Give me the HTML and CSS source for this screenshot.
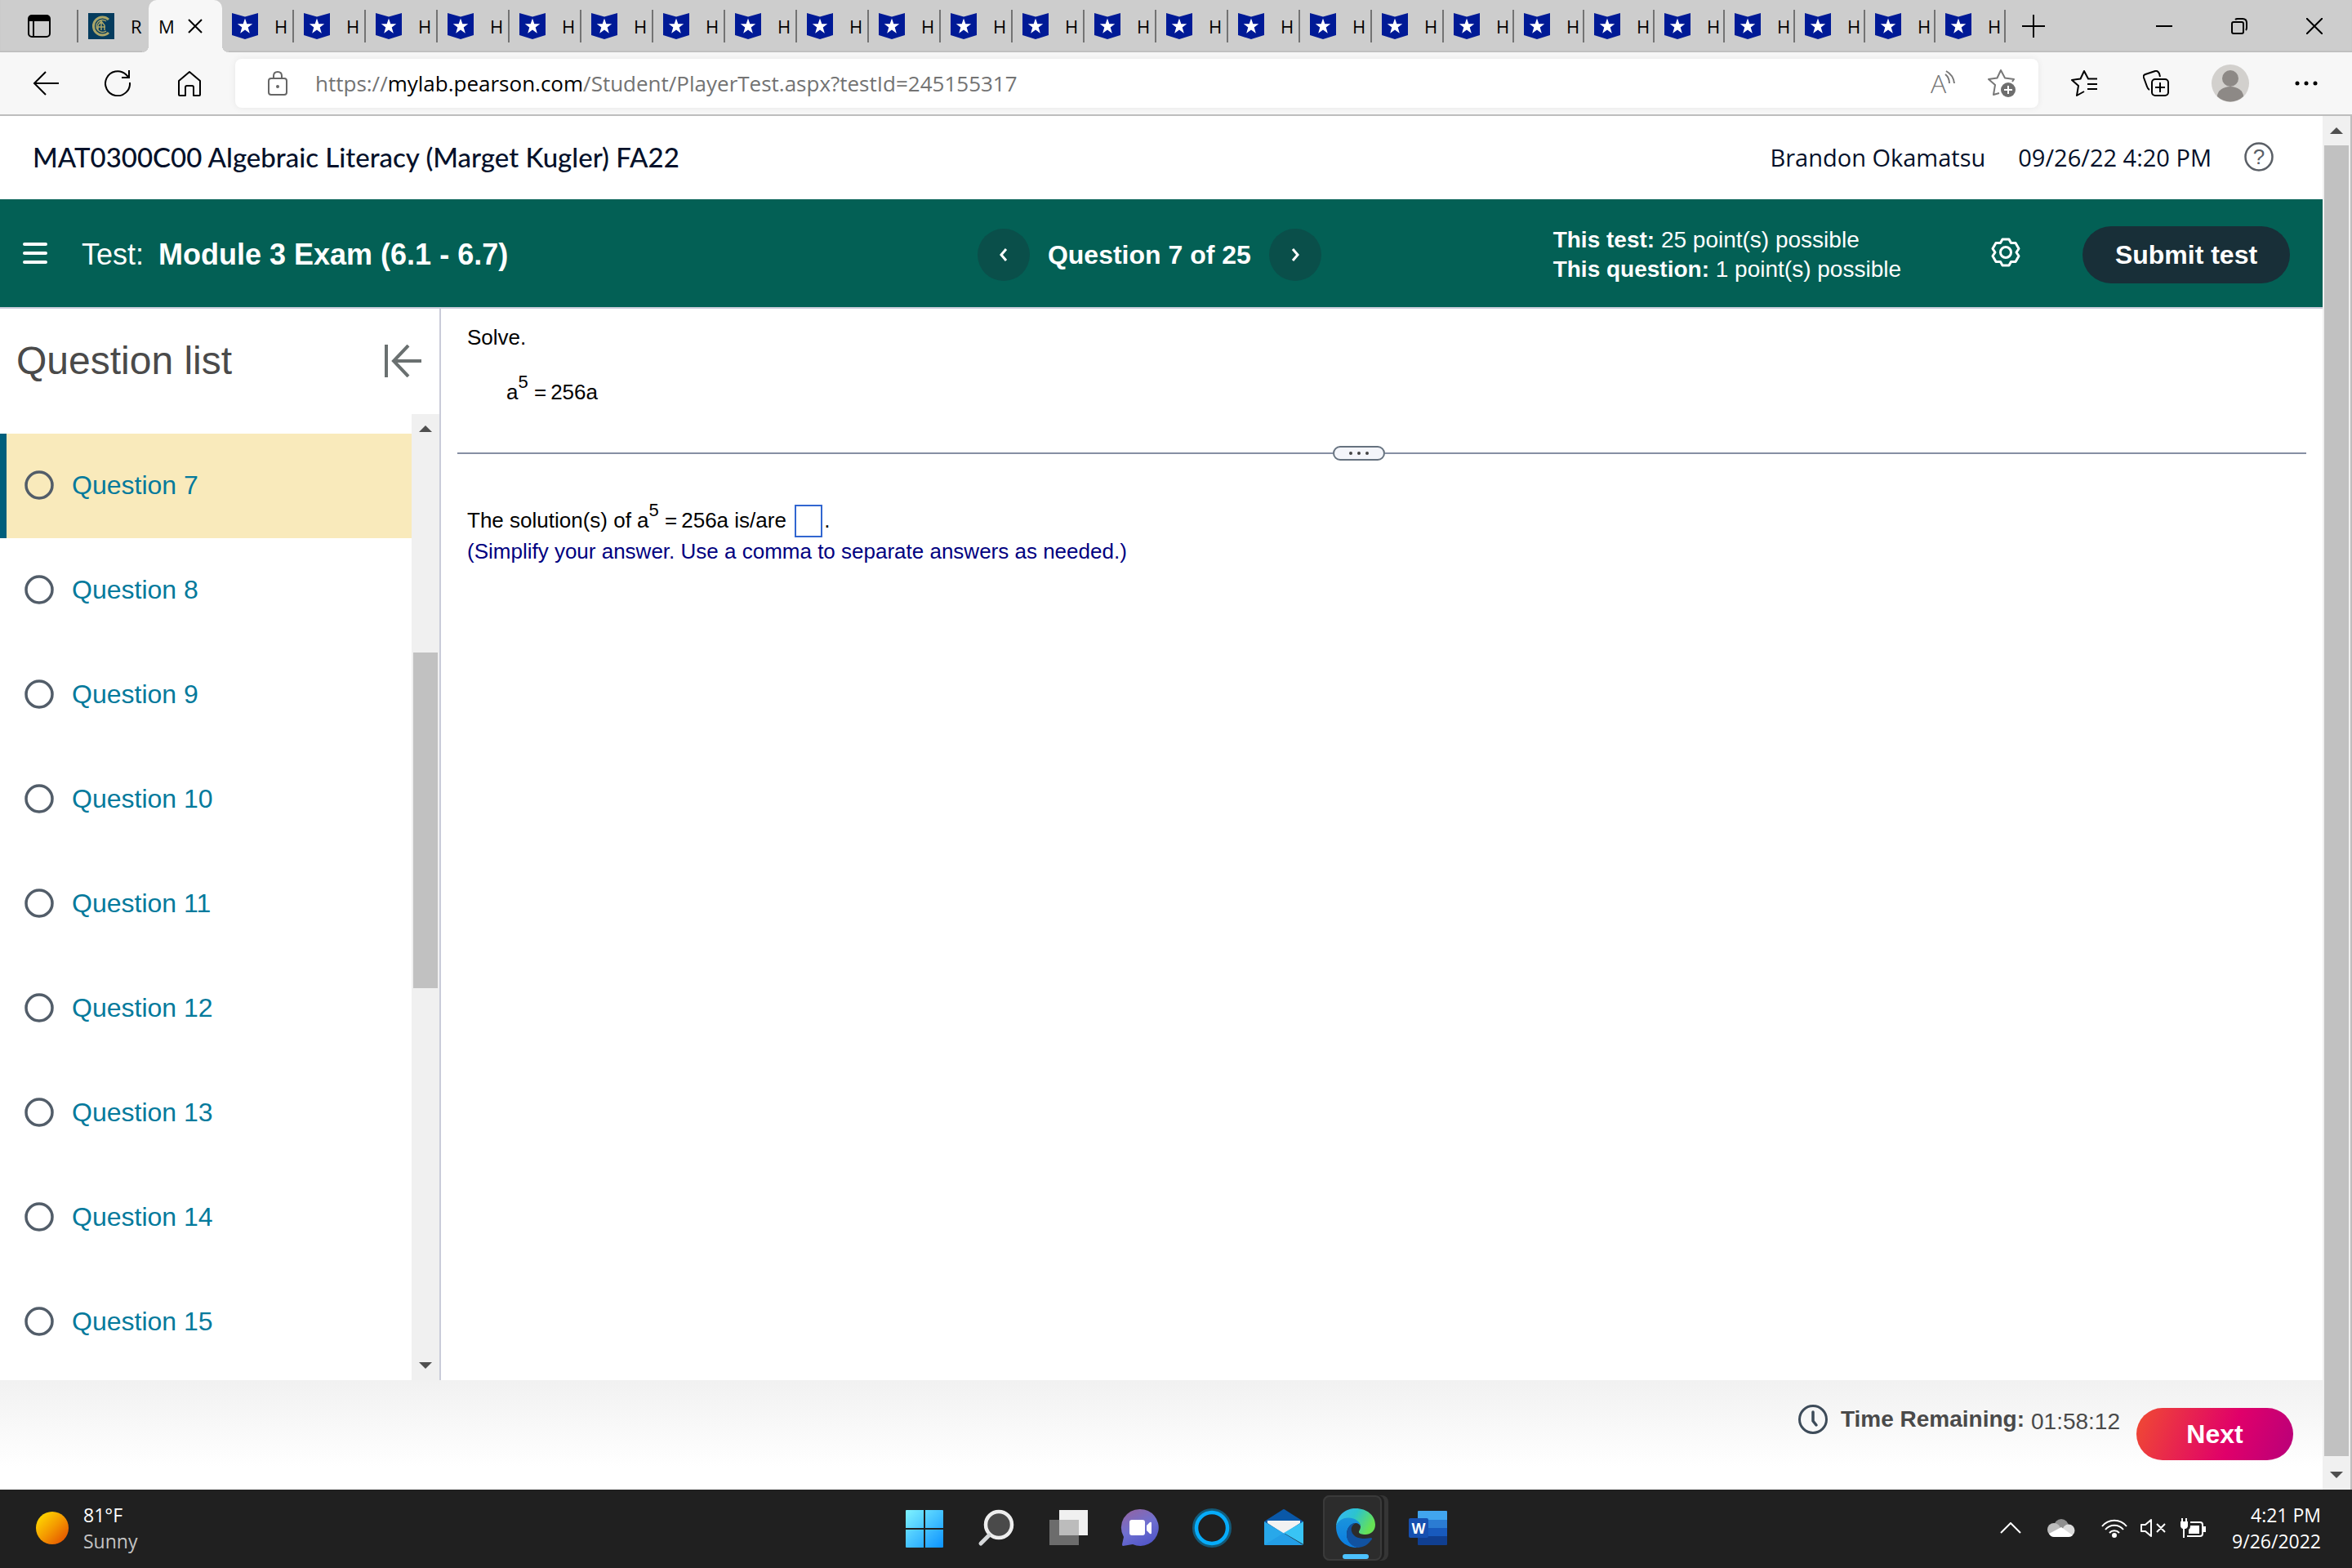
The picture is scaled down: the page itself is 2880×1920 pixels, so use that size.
FILE: index.html
```html
<!DOCTYPE html>
<html lang="en">
<head>
  <meta charset="UTF-8" />
  <meta name="viewport" content="width=device-width, initial-scale=1.0" />
  <title>Module 3 Exam (6.1 - 6.7)</title>
  <link rel="stylesheet" href="styles.css">
</head>
<body>
  <!-- shared icons -->
  <svg class="defs" aria-hidden="true">
    <symbol id="badge" viewBox="0 0 32 32">
      <path fill="#001a96" d="M0 0l16 4.500L32 0v27l-16 5-16-5z"/>
      <path fill="#fff" d="M16 6.500l2.300 6.700h6.900l-5.500 4.200 2.100 7.300-5.800-4.300-5.800 4.300 2.100-7.300-5.500-4.200h6.900z"/>
    </symbol>
    <symbol id="up" viewBox="0 0 16 8"><path fill="#4f4f4f" d="M8 0l8 8H0z"/></symbol>
    <symbol id="down" viewBox="0 0 16 8"><path fill="#4f4f4f" d="M0 0h16L8 8z"/></symbol>
    <symbol id="ring" viewBox="0 0 36 36"><circle cx="18" cy="18" r="16" fill="none" stroke="#525d69" stroke-width="3.500"/></symbol>
  </svg>

  <div class="tabstrip">
    <button class="tab-actions" aria-label="Tab actions">
      <svg width="28" height="28" viewBox="0 0 28 28"><rect x="1" y="1" width="26" height="26" rx="4" fill="none" stroke="#000" stroke-width="2"/><path d="M1 8V4q0-3 3-3h20q3 0 3 3v4zM6 8h2v19H6z"/></svg>
    </button>
    <div class="tab first">
      <svg width="32" height="32" viewBox="0 0 32 32"><path fill="#053c5e" d="M0 0h32v32H0z"/><g fill="none" stroke="#a9a568"><path stroke-width="3" d="M25 8a11 11 0 1 0 0 16"/><path stroke-width="1.500" d="M22 10a7.500 7.500 0 1 0 0 12M12 21v-6l4-5 4 5v6M16 10v11M11 17h10"/></g></svg>
      <span>R</span>
    </div>
    <div class="tab active">
      <span>M</span>
      <button aria-label="Close tab"><svg width="18" height="18" viewBox="0 0 18 18"><path d="M1 1l16 16M17 1L1 17" stroke="#000" stroke-width="2"/></svg></button>
    </div>
    <div class="tab"><svg><use href="#badge"/></svg><span>H</span></div>
    <div class="tab"><svg><use href="#badge"/></svg><span>H</span></div>
    <div class="tab"><svg><use href="#badge"/></svg><span>H</span></div>
    <div class="tab"><svg><use href="#badge"/></svg><span>H</span></div>
    <div class="tab"><svg><use href="#badge"/></svg><span>H</span></div>
    <div class="tab"><svg><use href="#badge"/></svg><span>H</span></div>
    <div class="tab"><svg><use href="#badge"/></svg><span>H</span></div>
    <div class="tab"><svg><use href="#badge"/></svg><span>H</span></div>
    <div class="tab"><svg><use href="#badge"/></svg><span>H</span></div>
    <div class="tab"><svg><use href="#badge"/></svg><span>H</span></div>
    <div class="tab"><svg><use href="#badge"/></svg><span>H</span></div>
    <div class="tab"><svg><use href="#badge"/></svg><span>H</span></div>
    <div class="tab"><svg><use href="#badge"/></svg><span>H</span></div>
    <div class="tab"><svg><use href="#badge"/></svg><span>H</span></div>
    <div class="tab"><svg><use href="#badge"/></svg><span>H</span></div>
    <div class="tab"><svg><use href="#badge"/></svg><span>H</span></div>
    <div class="tab"><svg><use href="#badge"/></svg><span>H</span></div>
    <div class="tab narrow"><svg><use href="#badge"/></svg><span>H</span></div>
    <div class="tab narrow"><svg><use href="#badge"/></svg><span>H</span></div>
    <div class="tab narrow"><svg><use href="#badge"/></svg><span>H</span></div>
    <div class="tab narrow"><svg><use href="#badge"/></svg><span>H</span></div>
    <div class="tab narrow"><svg><use href="#badge"/></svg><span>H</span></div>
    <div class="tab narrow"><svg><use href="#badge"/></svg><span>H</span></div>
    <div class="tab narrow"><svg><use href="#badge"/></svg><span>H</span></div>
    <div class="tab narrow"><svg><use href="#badge"/></svg><span>H</span></div>
    <button class="new-tab" aria-label="New tab"><svg width="28" height="28" viewBox="0 0 28 28"><path d="M14 0v28M0 14h28" stroke="#000" stroke-width="2"/></svg></button>
    <div class="window-controls">
      <button aria-label="Minimize"><svg width="20" height="20" viewBox="0 0 20 20"><path d="M0 10h20" stroke="#000" stroke-width="2"/></svg></button>
      <button aria-label="Restore"><svg width="20" height="20" viewBox="0 0 20 20" fill="none" stroke="#000" stroke-width="2"><rect x="1" y="5" width="14" height="14" rx="2"/><path d="M5 2q1-1 3-1h6q5 0 5 5v6q0 2-1 3"/></svg></button>
      <button aria-label="Close"><svg width="20" height="20" viewBox="0 0 20 20"><path d="M0 0l20 20M20 0L0 20" stroke="#000" stroke-width="2"/></svg></button>
    </div>
  </div>

  <div class="toolbar">
    <div class="nav-buttons">
      <button aria-label="Back"><svg width="32" height="32" viewBox="0 0 32 32" fill="none" stroke="#000" stroke-width="2"><path d="M16 2L2 16l14 14M2 16h30"/></svg></button>
      <button aria-label="Refresh"><svg width="32" height="32" viewBox="0 0 32 32" fill="none" stroke="#000" stroke-width="2"><path d="M31 15a15 15 0 1 1-5-10l4 4M30 0v9h-9"/></svg></button>
      <button aria-label="Home"><svg width="32" height="32" viewBox="0 0 32 32" fill="none" stroke="#000" stroke-width="2" stroke-linejoin="round"><path d="M3 13L16 2l13 11v17q0 1-1 1h-7V21q0-2-2-2h-6q-2 0-2 2v10H4q-1 0-1-1z"/></svg></button>
    </div>
    <div class="address">
      <svg width="24" height="32" viewBox="0 0 24 32" fill="none" stroke="#666" stroke-width="2"><rect x="1" y="10" width="22" height="20" rx="3"/><path d="M7 10V7q0-5 5-5t5 5v3"/><circle cx="12" cy="20" r="1" fill="#666"/></svg>
      <span class="url">https://<b>mylab.pearson.com</b>/Student/PlayerTest.aspx?testId=245155317</span>
      <button class="read" aria-label="Read aloud"><svg width="32" height="32" viewBox="0 0 32 32"><text x="0" y="28" font-family="Open Sans" font-size="32" font-weight="300" fill="#777">A</text><path d="M18 5q5 4 5 11M19 1q9 5 10 15" fill="none" stroke="#777" stroke-width="2"/></svg></button>
      <button aria-label="Add to favorites"><svg width="34" height="34" viewBox="0 0 34 34"><path d="M14 29l-7 2 2-12-8-7 10.500-1.500L16 1l5 9.500L32 12l-2 3" fill="none" stroke="#777" stroke-width="2" stroke-linejoin="round"/><circle cx="25" cy="25" r="9" fill="#6e6e6e"/><path d="M25 20v10M20 25h10" stroke="#fff" stroke-width="2"/></svg></button>
    </div>
    <div class="browser-actions">
      <button aria-label="Favorites"><svg width="32" height="32" viewBox="0 0 32 32" fill="none" stroke="#000" stroke-width="2" stroke-linejoin="round"><path d="M16 26l-9 5 2-12-8-7 10.500-1.500L16 1l5 9.500h11M20 17h12M20 23h12"/></svg></button>
      <button aria-label="Collections"><svg width="32" height="32" viewBox="0 0 32 32" fill="none" stroke="#000" stroke-width="2"><rect x="11" y="11" width="20" height="20" rx="4"/><path d="M21 15v12M15 21h12M8 24q-2-1-3-4L1 9q-1-3 2-4l12-4q3-1 5 3l1 4"/></svg></button>
      <button class="avatar" aria-label="Profile"><svg width="46" height="46" viewBox="0 0 46 46"><circle cx="23" cy="23" r="23" fill="#d2d0cd"/><circle cx="23" cy="17" r="10" fill="#8d8986"/><path fill="#8d8986" d="M7 39a16 12 0 0 1 32 0 23 23 0 0 1-32 0z"/></svg></button>
      <button aria-label="Settings and more"><svg width="28" height="8" viewBox="0 0 28 8"><circle cx="3" cy="4" r="2.500"/><circle cx="14" cy="4" r="2.500"/><circle cx="25" cy="4" r="2.500"/></svg></button>
    </div>
  </div>

  <div class="viewport">
    <div class="page">
      <header class="course">
        <h1>MAT0300C00 Algebraic Literacy (Marget Kugler) FA22</h1>
        <span>Brandon Okamatsu</span>
        <span>09/26/22 4:20 PM</span>
        <button aria-label="Help"><svg width="36" height="36" viewBox="0 0 36 36"><circle cx="18" cy="18" r="16.500" fill="none" stroke="#5a5f66" stroke-width="2.500"/><text x="18" y="27" text-anchor="middle" font-family="Liberation Sans" font-size="26" fill="#5a5f66">?</text></svg></button>
      </header>

      <div class="testbar">
        <div class="test-title">
          <button aria-label="Menu"><svg width="30" height="28" viewBox="0 0 30 28"><path d="M2 3h26M2 14h26M2 25h26" stroke="#fff" stroke-width="4" stroke-linecap="round"/></svg></button>
          <span>Test:</span> <strong>Module 3 Exam (6.1 - 6.7)</strong>
        </div>
        <div class="pager">
          <button aria-label="Previous question"><svg width="12" height="16" viewBox="0 0 12 16"><path d="M9 1L3 8l6 7" fill="none" stroke="#fff" stroke-width="3"/></svg></button>
          <strong>Question 7 of 25</strong>
          <button aria-label="Next question"><svg width="12" height="16" viewBox="0 0 12 16"><path d="M3 1l6 7-6 7" fill="none" stroke="#fff" stroke-width="3"/></svg></button>
        </div>
        <div class="points">
          <div><b>This test:</b> 25 point(s) possible</div>
          <div><b>This question:</b> 1 point(s) possible</div>
        </div>
        <button class="gear" aria-label="Settings"><svg width="36" height="36" viewBox="0 0 36 36" fill="none" stroke="#fff" stroke-width="3" stroke-linejoin="round"><path d="M14 2h8l2.500 4.500L30 6.500l4 7-3 4.500 3 4.500-4 7-5.500 0L22 34h-8l-2.500-4.500H6l-4-7L5 18l-3-4.500 4-7h5.500z"/><circle cx="18" cy="18" r="6.500"/></svg></button>
        <button class="submit">Submit test</button>
      </div>

      <div class="workspace">
        <aside class="sidebar">
          <div class="sidebar-head">
            <h2>Question list</h2>
            <button aria-label="Collapse question list"><svg width="46" height="40" viewBox="0 0 46 40" fill="none" stroke="#6a7070" stroke-width="4"><path d="M3 0v40M30 1L12 20l18 19M12 20h34"/></svg></button>
          </div>
          <div class="list-area">
            <nav class="questions">
              <a class="current" href="#q7"><svg><use href="#ring"/></svg>Question 7</a>
              <a href="#q8"><svg><use href="#ring"/></svg>Question 8</a>
              <a href="#q9"><svg><use href="#ring"/></svg>Question 9</a>
              <a href="#q10"><svg><use href="#ring"/></svg>Question 10</a>
              <a href="#q11"><svg><use href="#ring"/></svg>Question 11</a>
              <a href="#q12"><svg><use href="#ring"/></svg>Question 12</a>
              <a href="#q13"><svg><use href="#ring"/></svg>Question 13</a>
              <a href="#q14"><svg><use href="#ring"/></svg>Question 14</a>
              <a href="#q15"><svg><use href="#ring"/></svg>Question 15</a>
            </nav>
            <div class="scrollbar list-scroll" aria-hidden="true">
              <svg><use href="#up"/></svg>
              <div class="track"><div class="thumb"></div></div>
              <svg><use href="#down"/></svg>
            </div>
          </div>
        </aside>

        <main class="question">
          <div class="prompt">
            <p>Solve.</p>
            <p class="equation">a<sup>5</sup> <span class="eq">=</span>256a</p>
          </div>
          <div class="divider"><button aria-label="Resize question area"><svg width="24" height="6" viewBox="0 0 24 6" fill="#444"><circle cx="2" cy="3" r="2"/><circle cx="12" cy="3" r="2"/><circle cx="22" cy="3" r="2"/></svg></button></div>
          <div class="answer">
            <p><label for="answer">The solution(s) of a<sup>5</sup> <span class="eq">=</span>256a is/are</label> <input id="answer" type="text">.</p>
            <p class="hint">(Simplify your answer. Use a comma to separate answers as needed.)</p>
          </div>
        </main>
      </div>

      <footer class="footer">
        <svg width="36" height="36" viewBox="0 0 36 36" fill="none" stroke="#3d4b59" stroke-linecap="round" stroke-linejoin="round"><circle cx="18" cy="18" r="16.500" stroke-width="3"/><path d="M18 9v11l4 5" stroke-width="3.500"/></svg>
        <b>Time Remaining:</b>
        <span class="clock">01:58:12</span>
        <button class="next">Next</button>
      </footer>
    </div>
    <div class="scrollbar page-scroll" aria-hidden="true">
      <svg><use href="#up"/></svg>
      <div class="track"><div class="thumb"></div></div>
      <svg><use href="#down"/></svg>
    </div>
  </div>

  <div class="taskbar">
    <div class="weather">
      <span class="sun"></span>
      <div>
        <div>81°F</div>
        <div class="dim">Sunny</div>
      </div>
    </div>
    <div class="apps">
      <button aria-label="Start"><svg viewBox="0 0 48 48"><defs><linearGradient id="win" x2="1" y2="1"><stop stop-color="#7ff3ff"/><stop offset="1" stop-color="#0c93ff"/></linearGradient></defs><path fill="url(#win)" d="M1 3q0-1 1-1h21v22H1zM25 2h21q1 0 1 1v21H25zM1 26h22v22H2q-1 0-1-1zM25 26h22v21q0 1-1 1H25z"/></svg></button>
      <button aria-label="Search"><svg viewBox="0 0 48 48"><circle cx="27" cy="20" r="16" fill="#4a4a4a" stroke="#eee" stroke-width="4.500"/><path d="M15 33L5 43" stroke="#d5d8da" stroke-width="5" stroke-linecap="round"/></svg></button>
      <button aria-label="Task view"><svg viewBox="0 0 48 48"><path fill="#f0f0f0" d="M13 2h35v31H13z"/><path fill="#7a7a7a" fill-opacity=".85" d="M1 14h36v31H1z"/><path fill="#bcbcbc" d="M13 14h24v19H13z"/></svg></button>
      <button aria-label="Chat"><svg viewBox="0 0 48 48"><defs><linearGradient id="chat" x1=".2" x2=".7" y2="1"><stop stop-color="#9164a4"/><stop offset=".5" stop-color="#6f70d0"/><stop offset="1" stop-color="#5055c8"/></linearGradient></defs><path fill="url(#chat)" d="M24 1a22.500 22.500 0 1 1-9 43L3 46q-1 0-1-2l2-9A22.500 22.500 0 0 1 24 1z"/><rect x="11" y="14" width="19" height="19" rx="3" fill="#fff"/><path fill="#fff" d="M32 21l4-4q2-1 2 1v12q0 2-2 1l-4-4z"/></svg></button>
      <button aria-label="Cortana"><svg viewBox="0 0 48 48" fill="none"><circle cx="24" cy="24" r="22.500" stroke="#145a78" stroke-width="3"/><circle cx="24" cy="24" r="19" stroke="#06acfa" stroke-width="4.500"/></svg></button>
      <button aria-label="Mail"><svg viewBox="0 0 48 48"><path fill="#0a58a8" d="M0 16L22 2q2-2 4 0l22 14-24 15z"/><path fill="#f2f2f2" d="M4 15h40v3L24 31 4 18z"/><path fill="#28a8ea" d="M0 16l48 29H1q-1 0-1-1z"/><path fill="#38c4f5" d="M48 16v28L24 30z"/><path fill="#1c8fe0" d="M0 45l24-15 24 15z" opacity=".4"/></svg></button>
      <div class="stack">
        <button class="running" aria-label="Microsoft Edge">
          <svg viewBox="0 0 48 48">
            <defs>
              <linearGradient id="edge-top" x2="1" y2=".4"><stop stop-color="#38b6fb"/><stop offset=".5" stop-color="#2cc3cf"/><stop offset="1" stop-color="#66e255"/></linearGradient>
              <linearGradient id="edge-mid" x2="0" y2="1"><stop stop-color="#1b95dc"/><stop offset="1" stop-color="#0a7be0"/></linearGradient>
            </defs>
            <path fill="url(#edge-mid)" d="M0 22C2 14 8 10 15 10c9 0 15 6 15 12-1-2-3-4-6-4-6 0-11 6-11 14 0 8 7 15 15 16C14 49 0 40 0 22z"/>
            <path fill="#1152a0" d="M13 32c0-8 5-14 11-14-4 2-6 5-5 10 2 7 9 9 16 9 4 0 6-1 8-1 2 1 1 2-1 4-4 6-11 8-16 8-8-2-13-8-13-16z"/>
            <path fill="url(#edge-top)" d="M0 22C1 8 12 0 24 0c14 0 24 9 24 20 0 8-6 12-12 12-5 0-8-1-8-3s2-3 2-7c0-5-6-10.500-15-10.500C7 11.500 2 16 0 22z"/>
          </svg>
        </button>
      </div>
      <button aria-label="Word"><svg viewBox="0 0 48 48"><path fill="#41a5ee" d="M12 4q0-1 1-1h34q1 0 1 1v10H12z"/><path fill="#2b7cd3" d="M12 14h36v10H12z"/><path fill="#185abd" d="M12 24h36v10H12z"/><path fill="#103f91" d="M12 34h36v10q0 1-1 1H13q-1 0-1-1z"/><rect x="1" y="12" width="24" height="24" rx="2" fill="#1650b0"/><text x="13" y="31" text-anchor="middle" font-family="Liberation Sans" font-weight="bold" font-size="18" fill="#fff">W</text></svg></button>
    </div>
    <div class="tray">
      <button aria-label="Show hidden icons"><svg width="26" height="14" viewBox="0 0 26 14"><path d="M1 13L13 1l12 12" fill="none" stroke="#fff" stroke-width="2"/></svg></button>
      <svg class="cloud" width="34" height="22" viewBox="0 0 34 22"><circle cx="17" cy="9" r="9" fill="#8f8f8f"/><circle cx="8" cy="13" r="8" fill="#bdbdbd"/><circle cx="26" cy="14" r="7.500" fill="#dcdcdc"/><path fill="#fff" d="M2 18l15-8 14 10q-2 2-5 2H8q-4 0-6-4z"/></svg>
      <svg width="32" height="24" viewBox="0 0 32 24" fill="none" stroke="#fff" stroke-width="2"><path d="M1 10a19 19 0 0 1 30 0M5 14a14 14 0 0 1 22 0M10 18a8 8 0 0 1 12 0"/><circle cx="16" cy="21" r="2" fill="#fff"/></svg>
      <svg width="32" height="24" viewBox="0 0 32 24" fill="none" stroke="#fff" stroke-width="2" stroke-linejoin="round"><path d="M1 8v8h5l7 6V2L6 8zM20 7l10 10M30 7L20 17"/></svg>
      <svg width="32" height="24" viewBox="0 0 32 24" fill="none" stroke="#fff" stroke-width="2"><path d="M13 5h12q3 0 3 3v11q0 3-3 3H9M5 12v12"/><path fill="#fff" stroke="none" d="M2 0h2v4h3V0h2v4h1v5q0 3-3 4H4q-3-1-3-4V4h1zM13 9h11v10H11v-5q2-1 2-5zM28 10h4v7h-4z"/></svg>
      <div class="datetime">
        <div>4:21 PM</div>
        <div>9/26/2022</div>
      </div>
    </div>
  </div>
</body>
</html>
```
FILE: styles.css
```css
* {
  box-sizing: border-box;
}
body {
  margin: 0;
  min-height: 100vh;
  display: flex;
  flex-direction: column;
  font-family: 'Liberation Sans', Arial, sans-serif;
  color: #000;
  background: #fff;
}
button {
  padding: 0;
  border: none;
  background: none;
  font-family: inherit;
  color: inherit;
  cursor: pointer;
  display: flex;
  align-items: center;
  justify-content: center;
}
h1, h2, p {
  margin: 0;
  font-weight: normal;
}
svg {
  display: block;
  flex-shrink: 0;
}
.defs {
  width: 0;
  height: 0;
  position: absolute;
}

/* browser tabs */
.tabstrip {
  display: flex;
  align-items: center;
  height: 64px;
  background: #cdcdcd;
  font-family: 'Open Sans', 'Segoe UI', sans-serif;
  font-size: 22px;
  box-shadow: inset 0 -2px 2px -1px #b4b4b4;
}
.tab-actions {
  width: 96px;
  height: 40px;
  padding-left: 2px;
  border-right: 2px solid #737373;
}
.tab {
  width: 88px;
  height: 40px;
  padding-left: 12px;
  display: flex;
  align-items: center;
  gap: 20px;
  border-right: 2px solid #737373;
}
.tab svg {
  width: 32px;
  height: 32px;
}
.tab.narrow {
  width: 86px;
}
.tab.first {
  width: 86px;
  border-right: none;
}
.tab.active {
  position: relative;
  width: 90px;
  height: 64px;
  border: none;
  border-radius: 10px 10px 0 0;
  background: #f7f7f7;
  gap: 16px;
}
.tab.active::before,
.tab.active::after {
  content: "";
  position: absolute;
  bottom: 0;
  width: 8px;
  height: 8px;
}
.tab.active::before {
  right: 100%;
  background: radial-gradient(circle at 0 0, #cdcdcd 8px, #f7f7f7 8px);
}
.tab.active::after {
  left: 100%;
  background: radial-gradient(circle at 100% 0, #cdcdcd 8px, #f7f7f7 8px);
}
.tab.active svg {
  width: 18px;
  height: 18px;
}
.new-tab {
  margin-left: 20px;
}
.window-controls {
  display: flex;
  gap: 72px;
  margin-left: auto;
  margin-right: 36px;
}

/* toolbar */
.toolbar {
  display: flex;
  align-items: center;
  height: 78px;
  padding: 0 42px 0 40px;
  background: #f7f7f7;
  border-bottom: 2px solid #bdbdbd;
}
.nav-buttons {
  display: flex;
  gap: 56px;
  width: 248px;
}
.address {
  flex: 1;
  height: 60px;
  padding: 0 28px 0 40px;
  display: flex;
  align-items: center;
  background: #fff;
  border-radius: 8px;
  box-shadow: 0 0 8px rgba(0, 0, 0, 0.07);
}
.url {
  margin-left: 34px;
  font-family: 'Open Sans', 'Segoe UI', sans-serif;
  font-size: 26px;
  color: #737373;
}
.url b {
  font-weight: normal;
  color: #000;
}
.read {
  margin-left: auto;
  margin-right: 38px;
}
.read svg {
  overflow: visible;
}
.browser-actions {
  display: flex;
  align-items: center;
  gap: 56px;
  margin-left: 40px;
}
.avatar {
  margin-left: -4px;
}

/* page + scrollbars */
.viewport {
  flex: 1;
  display: flex;
}
.page {
  flex: 1;
  display: flex;
  flex-direction: column;
}
.scrollbar {
  display: flex;
  flex-direction: column;
  align-items: center;
  background: #f0f0f0;
  padding: 14px 0;
  gap: 14px;
}
.scrollbar svg {
  width: 16px;
  height: 8px;
}
.track {
  flex: 1;
  width: 100%;
  padding: 0 2px;
  display: flex;
  flex-direction: column;
}
.thumb {
  background: #c1c1c1;
}
.page-scroll {
  width: 36px;
  border-right: 2px solid #bdbdbd;
}
.page-scroll .track {
  padding-bottom: 5px;
}
.page-scroll .thumb {
  flex: 1;
}
.list-scroll {
  width: 34px;
}
.list-scroll .thumb {
  margin-top: 256px;
  height: 37%;
}

/* course header */
.course {
  display: flex;
  align-items: center;
  gap: 40px;
  height: 102px;
  padding: 0 60px 2px 40px;
  font-family: 'Open Sans', sans-serif;
  font-size: 29px;
  color: #05112a;
}
.course h1 {
  flex: 1;
  font-family: Lato, sans-serif;
  font-weight: 500;
  font-size: 33px;
}

/* green test bar */
.testbar {
  display: flex;
  align-items: center;
  height: 134px;
  padding: 4px 40px 0 28px;
  background: #036055;
  border-bottom: 2px solid #c9cbd9;
  color: #fff;
  font-size: 32px;
}
.test-title {
  display: flex;
  align-items: center;
  gap: 18px;
  width: 42%;
  font-size: 36px;
}
.test-title button {
  margin: 0 24px 4px 0;
}
.pager {
  display: flex;
  align-items: center;
  gap: 22px;
  margin-left: 3px;
}
.pager button {
  width: 64px;
  height: 64px;
  border-radius: 50%;
  background: #0a4f4a;
}
.points {
  margin-left: auto;
  font-size: 28px;
  line-height: 36px;
}
.gear {
  margin: 0 76px 6px 110px;
}
.submit {
  width: 254px;
  height: 70px;
  border-radius: 35px;
  background: #182f38;
  font-size: 32px;
  font-weight: bold;
}

/* question list */
.workspace {
  flex: 1;
  display: flex;
}
.sidebar {
  width: 540px;
  display: flex;
  flex-direction: column;
  border-right: 2px solid #c9cbd9;
}
.sidebar-head {
  display: flex;
  align-items: center;
  justify-content: space-between;
  height: 129px;
  padding: 0 22px 2px 20px;
}
.sidebar-head h2 {
  font-size: 48px;
  color: #4a4a4a;
}
.list-area {
  flex: 1;
  display: flex;
}
.questions {
  flex: 1;
  padding-top: 24px;
}
.questions a {
  display: flex;
  align-items: center;
  gap: 22px;
  height: 128px;
  padding: 0 0 2px 30px;
  font-size: 32px;
  color: #047a9c;
  text-decoration: none;
}
.questions a:hover {
  text-decoration: underline;
}
.questions svg {
  width: 36px;
  height: 36px;
}
.questions .current {
  padding-left: 22px;
  border-left: 8px solid #005f7c;
  background: #f9eabb;
}

/* question */
.question {
  flex: 1;
  padding: 0 20px;
  font-size: 26px;
}
.prompt {
  height: 176px;
  padding: 18px 12px;
  line-height: 34px;
}
.equation {
  margin-top: 33px;
  padding-left: 48px;
}
sup {
  font-size: 22px;
  line-height: 0;
  vertical-align: 14px;
}
.eq {
  margin-right: 5px;
}
.divider {
  display: flex;
  align-items: center;
  height: 18px;
  margin-top: -8px;
}
.divider::before,
.divider::after {
  content: "";
  flex: 1;
  height: 2px;
  background: #868fa3;
}
.divider::before {
  flex: 0 0 1072px;
}
.divider button {
  width: 64px;
  height: 18px;
  border: 2px solid #66727f;
  border-radius: 9px;
  background: #f4f5fa;
}
.answer {
  padding: 54px 12px;
  line-height: 38px;
}
.answer input {
  width: 34px;
  height: 40px;
  margin: -6px 2px -6px 3px;
  padding: 0;
  border: 2px solid #3166d0;
  font-size: 26px;
  vertical-align: baseline;
}
.hint {
  color: #000080;
}

/* footer */
.footer {
  display: flex;
  align-items: center;
  height: 134px;
  padding: 0 36px 2px 40px;
  justify-content: flex-end;
  background: linear-gradient(#f1f1f1, #fff 80%);
  font-size: 28px;
  color: #4a4a4a;
}
.footer > svg,
.footer b {
  margin-bottom: 36px;
}
.footer b {
  margin-left: 16px;
}
.clock {
  margin: 0 20px 30px 8px;
}
.next {
  width: 192px;
  height: 64px;
  border-radius: 32px;
  background: linear-gradient(110deg, #f04b32, #e0006a 60%, #b8007a);
  font-size: 32px;
  font-weight: bold;
  color: #fff;
}

/* taskbar */
.taskbar {
  display: grid;
  grid-template-columns: 1fr auto 1fr;
  align-items: center;
  height: 96px;
  padding: 0 38px 2px;
  background: #202020;
  color: #fff;
  font-family: 'Open Sans', 'Segoe UI', sans-serif;
  font-size: 23px;
  line-height: 32px;
}
.weather {
  display: flex;
  align-items: center;
  gap: 18px;
  padding-left: 6px;
}
.sun {
  width: 40px;
  height: 40px;
  border-radius: 50%;
  background: linear-gradient(135deg, #ffd800 10%, #f49a00 50%, #e34c00 95%);
}
.dim {
  color: #c4c4c4;
}
.apps {
  display: flex;
  align-items: center;
  gap: 40px;
}
.apps svg {
  width: 48px;
  height: 48px;
}
.stack {
  height: 80px;
  margin: 0 -16px;
  padding-right: 8px;
  border-radius: 8px;
  background: #353535;
}
.running {
  position: relative;
  width: 72px;
  height: 80px;
  padding-left: 8px;
  border: 2px solid #3a3a3a;
  border-radius: 8px;
  background: #2c2c2c;
  box-shadow: 3px 0 0 #202020;
}
.running::after {
  content: "";
  position: absolute;
  left: 22px;
  bottom: 0;
  width: 32px;
  height: 6px;
  border-radius: 3px;
  background: #4cc2ff;
}
.tray {
  display: flex;
  align-items: center;
  justify-content: flex-end;
  gap: 16px;
}
.cloud {
  margin: 0 16px;
}
.datetime {
  margin-left: 16px;
  text-align: right;
}
```
